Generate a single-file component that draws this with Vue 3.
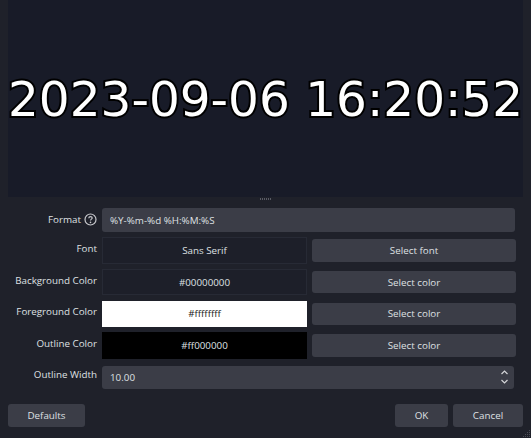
<script setup>
const colorRows = [
  { label: 'Font', value: 'Sans Serif', action: 'Select font', kind: 'empty' },
  { label: 'Background Color', value: '#00000000', action: 'Select color', kind: 'empty' },
  { label: 'Foreground Color', value: '#ffffffff', action: 'Select color', kind: 'white' },
  { label: 'Outline Color', value: '#ff000000', action: 'Select color', kind: 'black' }
]
</script>

<template>
  <div class="dialog">
    <div class="preview">
      <div class="clock">2023-09-06 16:20:52</div>
    </div>
    <div class="splitter"></div>
    <div class="form">
      <div class="label format-label">
        <span>Format</span>
        <svg class="help" width="13" height="13" viewBox="0 0 13 13" fill="none">
          <circle cx="6.5" cy="6.5" r="5.5" stroke="#c8c9cd" stroke-width="1.2" />
          <path d="M4.8 5.2C4.8 4.2 5.6 3.6 6.5 3.6C7.4 3.6 8.2 4.2 8.2 5C8.2 6.1 6.5 6.2 6.5 7.6" stroke="#c8c9cd" stroke-width="1.2" />
          <circle cx="6.5" cy="9.4" r=".8" fill="#c8c9cd" />
        </svg>
      </div>
      <div class="input wide format-input">%Y-%m-%d %H:%M:%S</div>

      <template v-for="row in colorRows" :key="row.label">
        <div class="label">{{ row.label }}</div>
        <div class="swatch" :class="row.kind">{{ row.value }}</div>
        <button class="btn select">{{ row.action }}</button>
      </template>

      <div class="label">Outline Width</div>
      <div class="input wide spin">
        <span>10.00</span>
        <svg class="arrows" width="9" height="16" viewBox="0 0 9 16" fill="none" stroke="#d4d5d8" stroke-width="1.2">
          <path d="M1.5 5L4.5 2L7.5 5" />
          <path d="M1.5 11L4.5 14L7.5 11" />
        </svg>
      </div>
    </div>
    <div class="footer">
      <button class="btn defaults">Defaults</button>
      <div class="right">
        <button class="btn ok">OK</button>
        <button class="btn cancel">Cancel</button>
      </div>
    </div>
    <svg class="grip" width="8" height="8" viewBox="0 0 8 8" fill="#4a4c55">
      <rect x="6" y="0" width="1" height="1" />
      <rect x="4" y="2" width="1" height="1" />
      <rect x="6" y="2" width="1" height="1" />
      <rect x="2" y="4" width="1" height="1" />
      <rect x="4" y="4" width="1" height="1" />
      <rect x="6" y="4" width="1" height="1" />
      <rect x="0" y="6" width="1" height="1" />
      <rect x="2" y="6" width="1" height="1" />
      <rect x="4" y="6" width="1" height="1" />
      <rect x="6" y="6" width="1" height="1" />
    </svg>
  </div>
</template>

<style scoped>
.dialog {
  position: relative;
  width: 531px;
  height: 438px;
  box-sizing: border-box;
  background: #1f212a;
  font-family: "Open Sans", sans-serif;
  font-size: 9.8px;
  color: #dfe0e3;
  overflow: hidden;
}
.preview {
  height: 197px;
  margin: 0 8px;
  background: #181b28;
  display: flex;
  align-items: center;
  justify-content: center;
}
.clock {
  font-family: "DejaVu Sans", sans-serif;
  font-size: 48.5px;
  line-height: 1;
  color: #fff;
  white-space: nowrap;
  -webkit-text-stroke: 4px #000;
  paint-order: stroke fill;
  margin-top: 1px;
}
.splitter {
  width: 12px;
  height: 2px;
  margin: 1px auto 8px;
  background: repeating-linear-gradient(90deg, #5a5c65 0 1px, transparent 1px 2px);
}
.form {
  display: grid;
  grid-template-columns: 97px 205px 204px;
  column-gap: 5px;
  row-gap: 5.2px;
  padding-right: 16px;
  align-items: center;
}
.label {
  text-align: right;
  white-space: nowrap;
  padding-bottom: 4px;
}
.format-label {
  display: flex;
  justify-content: flex-end;
  align-items: center;
  gap: 3px;
  padding-bottom: 2px;
}
.help {
  flex: none;
}
.input {
  height: 24px;
  box-sizing: border-box;
  background: #3b3d47;
  border-radius: 3px;
  display: flex;
  align-items: center;
  padding: 0 8px;
}
.wide {
  grid-column: 2 / 4;
}
.format-input {
  margin-right: 1px;
}
.spin {
  height: 23px;
  margin: 2px 2px 0 0;
  justify-content: space-between;
  padding-right: 5px;
}
.swatch {
  height: 26.5px;
  box-sizing: border-box;
  display: flex;
  align-items: center;
  justify-content: center;
  border: 1px solid #272a35;
  background: #1d1f29;
}
.swatch.white {
  background: #fff;
  border-color: #fff;
  color: #1a1b20;
}
.swatch.black {
  background: #000;
  border-color: #000;
}
.btn {
  height: 22.5px;
  box-sizing: border-box;
  background: #3b3d47;
  border: 0;
  border-radius: 3px;
  color: #dfe0e3;
  font: inherit;
  padding: 0;
}
.select {
  width: 204px;
}
.footer {
  display: flex;
  justify-content: space-between;
  padding: 15.5px 8px 0;
}
.right {
  display: flex;
  gap: 5px;
}
.defaults {
  width: 77px;
}
.ok {
  width: 53px;
}
.cancel {
  width: 70px;
}
.grip {
  position: absolute;
  right: 0;
  bottom: 0;
}
</style>
